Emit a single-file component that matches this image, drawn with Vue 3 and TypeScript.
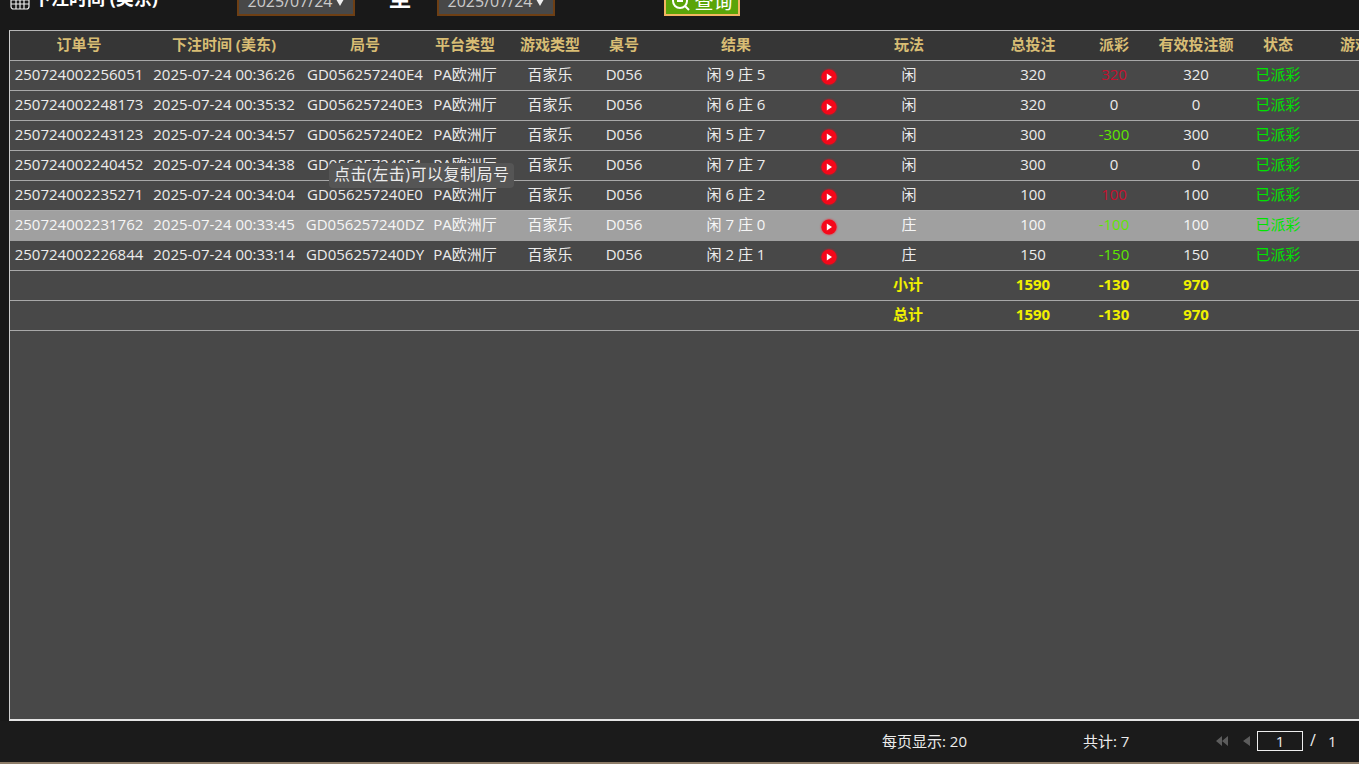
<script setup lang="ts">
type Row = { id: string, time: string, round: string, result: string, play: string, bet: number, payout: number, valid: number, active?: boolean }

const heads = ['订单号', '下注时间 (美东)', '局号', '平台类型', '游戏类型', '桌号', '结果', '', '玩法', '总投注', '派彩', '有效投注额', '状态', '游戏']

const rows: Row[] = [
  { id: '250724002256051', time: '2025-07-24 00:36:26', round: 'GD056257240E4', result: '闲 9 庄 5', play: '闲', bet: 320, payout: 320, valid: 320 },
  { id: '250724002248173', time: '2025-07-24 00:35:32', round: 'GD056257240E3', result: '闲 6 庄 6', play: '闲', bet: 320, payout: 0, valid: 0 },
  { id: '250724002243123', time: '2025-07-24 00:34:57', round: 'GD056257240E2', result: '闲 5 庄 7', play: '闲', bet: 300, payout: -300, valid: 300 },
  { id: '250724002240452', time: '2025-07-24 00:34:38', round: 'GD056257240E1', result: '闲 7 庄 7', play: '闲', bet: 300, payout: 0, valid: 0 },
  { id: '250724002235271', time: '2025-07-24 00:34:04', round: 'GD056257240E0', result: '闲 6 庄 2', play: '闲', bet: 100, payout: 100, valid: 100 },
  { id: '250724002231762', time: '2025-07-24 00:33:45', round: 'GD056257240DZ', result: '闲 7 庄 0', play: '庄', bet: 100, payout: -100, valid: 100, active: true },
  { id: '250724002226844', time: '2025-07-24 00:33:14', round: 'GD056257240DY', result: '闲 2 庄 1', play: '庄', bet: 150, payout: -150, valid: 150 }
]

const totals = [
  { label: '小计', bet: 1590, payout: -130, valid: 970 },
  { label: '总计', bet: 1590, payout: -130, valid: 970 }
]

const payoutClass = (n: number) => (n > 0 ? 'win' : n < 0 ? 'lose' : '')
</script>

<template>
  <div class="page">
    <div class="topbar">
      <svg class="cal" width="20" height="20" viewBox="0 0 20 20" fill="none" stroke="#eee" stroke-width="1.2">
        <rect x="1" y="1" width="18" height="18" rx="2.5" />
        <path d="M1 6H19M1 10H19M1 14H19M6 6V19M10 6V19M14 6V19" />
      </svg>
      <span class="range-label">下注时间 (美东)</span>
      <div class="date first">2025/07/24<i class="caret"></i></div>
      <span class="to">至</span>
      <div class="date">2025/07/24<i class="caret"></i></div>
      <button class="query">
        <svg width="20" height="20" viewBox="0 0 20 20" fill="none" stroke="#fff" stroke-width="2">
          <circle cx="9" cy="9" r="7" />
          <path d="M14 14L18 18M6 9H12" />
        </svg>
        查询
      </button>
    </div>

    <div class="panel">
      <div class="row head">
        <div v-for="(h, i) in heads" :key="i" class="cell">{{ h }}</div>
      </div>
      <div v-for="r in rows" :key="r.id" class="row" :class="{ active: r.active }">
        <div class="cell">{{ r.id }}</div>
        <div class="cell">{{ r.time }}</div>
        <div class="cell">{{ r.round }}</div>
        <div class="cell">PA欧洲厅</div>
        <div class="cell">百家乐</div>
        <div class="cell">D056</div>
        <div class="cell">{{ r.result }}</div>
        <div class="cell play-cell">
          <svg class="play" width="16" height="16" viewBox="0 0 16 16">
            <circle cx="8" cy="8" r="7.6" fill="#f5081a" />
            <path d="M5.8 4.6L11 8L5.8 11.4Z" fill="#fff" />
          </svg>
        </div>
        <div class="cell">{{ r.play }}</div>
        <div class="cell">{{ r.bet }}</div>
        <div class="cell" :class="payoutClass(r.payout)">{{ r.payout }}</div>
        <div class="cell">{{ r.valid }}</div>
        <div class="cell status">已派彩</div>
        <div class="cell"></div>
      </div>
      <div v-for="t in totals" :key="t.label" class="row total">
        <div class="cell label">{{ t.label }}</div>
        <div class="cell">{{ t.bet }}</div>
        <div class="cell">{{ t.payout }}</div>
        <div class="cell">{{ t.valid }}</div>
      </div>
      <div class="tip">点击(左击)可以复制局号</div>
    </div>

    <div class="footer">
      <span class="per-page">每页显示: 20</span>
      <span class="count">共计: 7</span>
      <svg class="pager" width="38" height="12" viewBox="0 0 38 12" fill="#5c5c5c">
        <path d="M6 1V11L0 6ZM12 1V11L6 6ZM34 1V11L27 6Z" />
      </svg>
      <span class="page-input">1</span>
      <span class="slash">/</span>
      <span class="page-total">1</span>
    </div>
    <div class="strip"></div>
  </div>
</template>

<style>
html, body { margin: 0; overflow: hidden; background: #191919 }
</style>

<style scoped>
.page {
  width: 1359px; height: 764px; display: flex; flex-direction: column; overflow: hidden; background: #191919;
  color: #ececec; font: 15px/1.2 "Open Sans", "Noto Sans CJK SC", sans-serif;
}

.topbar { flex: 0 0 30px; height: 30px; display: flex; align-items: flex-end; overflow: hidden; color: #fff }
.cal { flex: none; margin: 0 0 20px 10px }
.range-label { flex: none; width: 204px; margin: 0 0 20px 3px; font-size: 18px; font-weight: 700 }
.date {
  flex: none; box-sizing: border-box; width: 118px; height: 34px; margin-bottom: 14px; display: flex; align-items: center; justify-content: center; gap: 4px;
  background: #484848; border: 2px solid #6e3f14; color: #ccc; font-size: 16px; padding-top: 6px;
}
.caret { width: 0; height: 0; border: 4px solid transparent; border-top: 7px solid #eee; border-bottom: 0 }
.to { flex: none; box-sizing: border-box; width: 82px; padding-left: 8px; margin-bottom: 20px; text-align: center; font-size: 22px; font-weight: 700 }
.query {
  flex: none; box-sizing: border-box; width: 76px; height: 34px; margin: 0 0 14px 109px; padding: 6px 0 0; display: flex; align-items: center; justify-content: center; gap: 3px;
  background: #5aa409; border: 2px solid #f2b561; color: #fff; font: inherit; font-size: 19px;
}

.panel {
  flex: 0 0 691px; height: 691px; box-sizing: border-box; width: 1420px; margin-left: 9px; position: relative;
  background: #484848; border: 1px solid #b5b5b5; border-bottom: 2px solid #e4e4e4; border-left-color: #cfcfcf;
}
.row {
  display: grid; grid-template-columns: 138px 152px 130px 70px 100px 48px 176px 10px 150px 98px 64px 100px 64px 90px;
  box-sizing: border-box; height: 30px; padding-bottom: 4px; align-items: center; border-bottom: 1px solid #a8a8a8;
}
.row.head { background: #363636; color: #d8bd74; font-weight: 700 }
.row.active { background: #a0a0a0; border-bottom-color: #a0a0a0; color: #f6f6f6 }
.cell { text-align: center; white-space: nowrap; justify-self: center }
.play-cell { display: flex; justify-content: center; padding-top: 6px }
.play { flex: none; filter: drop-shadow(0 0 1px rgba(255, 0, 20, .8)) }
.win { color: #c5102f }
.lose { color: #5ee600 }
.status { color: #00e400 }
.row.total { color: #f0f000; font-weight: 700; grid-template-columns: 814px 10px 150px 98px 64px 100px 64px 90px }
.row.total .label { grid-column: 3; margin-right: 2px }

.tip {
  position: absolute; left: 319px; top: 132px; padding: 1px 5px 3px; border-radius: 4px; letter-spacing: .5px;
  background: #555; color: #ececec; font-size: 16px; line-height: 21px; white-space: nowrap;
}

.footer { flex: 1; display: flex; align-items: center; font-size: 15px; background: #1b1b1b; padding-bottom: 2px }
.per-page { flex: none; width: 90px; margin-left: 882px; white-space: nowrap }
.count { flex: none; width: 50px; margin-left: 111px; white-space: nowrap }
.pager { flex: none; margin-left: 83px }
.page-input { flex: none; box-sizing: border-box; width: 46px; height: 20px; margin-left: 3px; border: 1px solid #eee; text-align: center; line-height: 18px }
.slash { flex: none; margin-left: 7px; font-size: 16px }
.page-total { flex: none; margin-left: 12px }
.strip { flex: 0 0 2px; background: #8d7c68 }
</style>
